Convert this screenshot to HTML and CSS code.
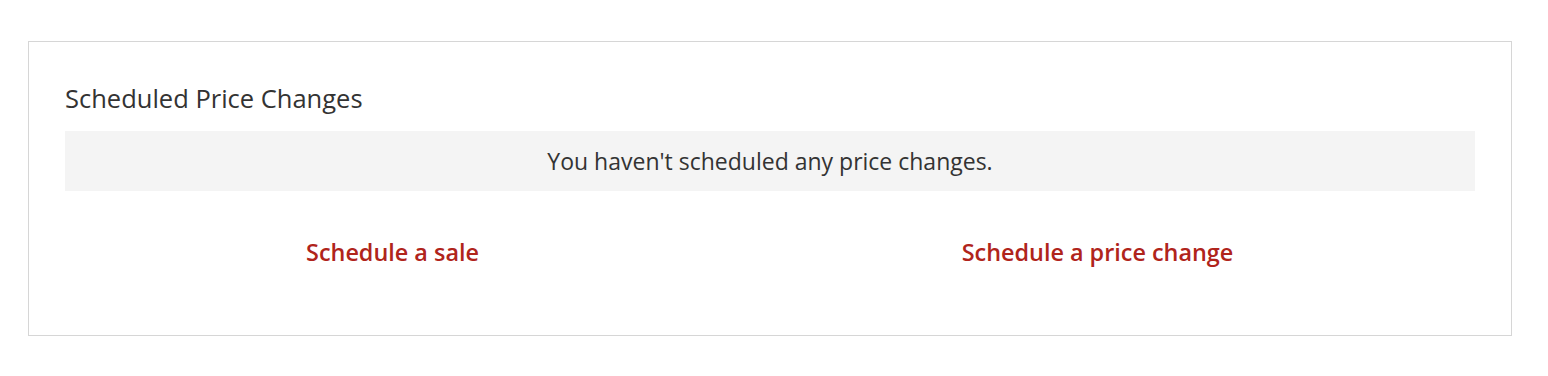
FILE: index.html
```html
<!DOCTYPE html>
<html lang="en">
<head>
    <meta charset="UTF-8">
    <title>Scheduled Price Changes</title>
    <link rel="stylesheet" href="styles.css">
</head>
<body>
    <div class="panel">
        <h2 class="panel-title">Scheduled Price Changes</h2>
        <div class="empty-msg">You haven't scheduled any price changes.</div>
        <div class="actions">
            <div class="action"><a href="#">Schedule a sale</a></div>
            <div class="action"><a href="#">Schedule a price change</a></div>
        </div>
    </div>
</body>
</html>
```

FILE: styles.css
```css
body {
    font-family: "Open Sans", "Liberation Sans", sans-serif;
    margin: 0;
    padding: 41px 36px 0 28px;
    background: #fff;
    color: #333;
}
.panel {
    border: 1px solid #d6d6d6;
    padding: 38px 36px 62px 36px;
}
.panel-title {
    font-size: 25.5px;
    font-weight: normal;
    margin: 0 0 15px 0;
    line-height: 36px;
}
.empty-msg {
    background: #f4f4f4;
    text-align: center;
    font-size: 23px;
    line-height: 60px;
}
.actions {
    display: flex;
    margin-top: 40px;
}
.action {
    flex: 1;
    text-align: center;
    padding-right: 50px;
    font-size: 23.4px;
    line-height: 42px;
}
.action a {
    color: #b0241b;
    font-weight: 600;
    text-decoration: none;
}
```
